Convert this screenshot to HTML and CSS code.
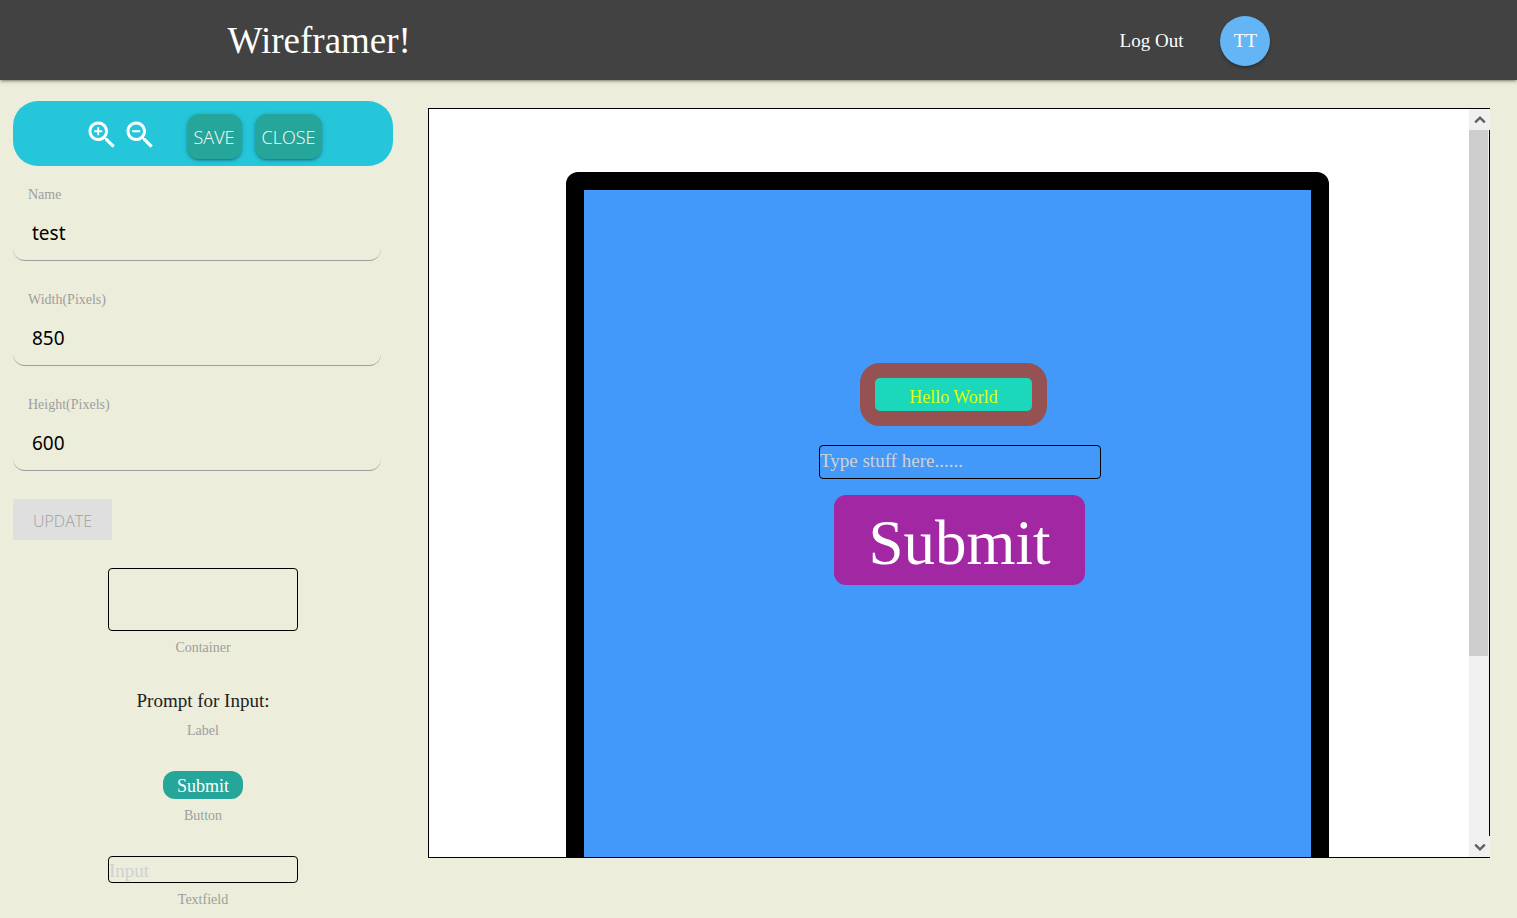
FILE: index.html
```html
<!DOCTYPE html>
<html lang="en">
<head>
<meta charset="utf-8">
<meta name="viewport" content="width=device-width, initial-scale=1">
<title>Wireframer!</title>
<link rel="stylesheet" href="styles.css">
</head>
<body>
<header class="navbar">
  <div class="navbar-inner">
    <a class="brand" href="#">Wireframer!</a>
    <nav class="nav-links">
      <a class="logout" href="#">Log Out</a>
      <a class="avatar" href="#" aria-label="Account">TT</a>
    </nav>
  </div>
</header>
<main class="editor">
  <aside class="sidebar">
    <div class="toolbar">
      <div class="zoom-group">
        <button class="icon-button" type="button" aria-label="Zoom in">
          <svg viewBox="0 0 24 24"><path d="M15.5 14h-.79l-.28-.27C15.41 12.59 16 11.11 16 9.5 16 5.91 13.09 3 9.5 3S3 5.91 3 9.5 5.91 16 9.5 16c1.61 0 3.09-.59 4.23-1.57l.27.28v.79l5 4.99L20.49 19l-4.99-5zm-6 0C7.01 14 5 11.99 5 9.5S7.01 5 9.5 5 14 7.01 14 9.5 11.99 14 9.5 14zm2.7-3.9h-2.1v2.1H8.9v-2.1H6.8V8.9h2.1V6.8h1.2v2.1h2.1v1.2z"/></svg>
        </button>
        <button class="icon-button" type="button" aria-label="Zoom out">
          <svg viewBox="0 0 24 24"><path d="M15.5 14h-.79l-.28-.27C15.41 12.59 16 11.11 16 9.5 16 5.91 13.09 3 9.5 3S3 5.91 3 9.5 5.91 16 9.5 16c1.61 0 3.09-.59 4.23-1.57l.27.28v.79l5 4.99L20.49 19l-4.99-5zm-6 0C7.01 14 5 11.99 5 9.5S7.01 5 9.5 5 14 7.01 14 9.5 11.99 14 9.5 14zM6.8 8.9h5.4v1.2H6.8z"/></svg>
        </button>
      </div>
      <div class="action-group">
        <button class="action" type="button">SAVE</button>
        <button class="action" type="button">CLOSE</button>
      </div>
    </div>
    <form class="fields">
      <div class="field">
        <label for="name">Name</label>
        <input id="name" type="text" value="test">
      </div>
      <div class="field">
        <label for="width">Width(Pixels)</label>
        <input id="width" type="text" value="850">
      </div>
      <div class="field">
        <label for="height">Height(Pixels)</label>
        <input id="height" type="text" value="600">
      </div>
      <button class="update" type="button" disabled>UPDATE</button>
    </form>
    <div class="palette">
      <div class="palette-item">
        <div class="sample-container"></div>
        <span class="caption">Container</span>
      </div>
      <div class="palette-item">
        <div class="sample-label">Prompt for Input:</div>
        <span class="caption">Label</span>
      </div>
      <div class="palette-item">
        <button class="sample-button" type="button">Submit</button>
        <span class="caption">Button</span>
      </div>
      <div class="palette-item">
        <input class="sample-input" type="text" placeholder="Input" aria-label="Textfield">
        <span class="caption">Textfield</span>
      </div>
    </div>
  </aside>
  <section class="workspace">
    <div class="viewport">
      <div class="wireframe">
        <div class="control greeting">Hello World</div>
        <input class="control textfield" type="text" placeholder="Type stuff here......" aria-label="Type stuff here">
        <button class="control submit" type="button">Submit</button>
      </div>
    </div>
    <div class="scrollbar">
      <button class="scroll-arrow" type="button" aria-label="Scroll up"><svg viewBox="0 0 10 8"><path d="M1 6l4-4 4 4"/></svg></button>
      <div class="scroll-track"><div class="scroll-thumb"></div></div>
      <button class="scroll-arrow" type="button" aria-label="Scroll down"><svg viewBox="0 0 10 8"><path d="M1 2l4 4 4-4"/></svg></button>
    </div>
  </section>
</main>
</body>
</html>
```
FILE: styles.css
```css
* { box-sizing: border-box; }

body {
  margin: 0;
  height: 100vh;
  overflow: hidden;
  background: #ecedda;
  color: #212121;
  font-family: "Liberation Serif", "Times New Roman", serif;
  font-size: 19px;
}

button, input { font: inherit; border: 0; padding: 0; margin: 0; background: none; }
a { color: inherit; text-decoration: none; }

.navbar {
  height: 80px;
  background: #424242;
  color: #fff;
  box-shadow: 0 2px 2px rgba(0, 0, 0, .14), 0 3px 1px -2px rgba(0, 0, 0, .12), 0 1px 5px rgba(0, 0, 0, .2);
}
.navbar-inner {
  width: 70%;
  height: 100%;
  margin: 0 auto;
  padding-right: 19px;
  display: flex;
  align-items: center;
  justify-content: space-between;
}
.brand { font-size: 37px; }
.nav-links { display: flex; align-items: center; gap: 37px; padding-top: 2px; }
.avatar {
  width: 50px;
  height: 50px;
  border-radius: 50%;
  background: #64b5f6;
  line-height: 50px;
  text-align: center;
  box-shadow: 0 2px 3px rgba(0, 0, 0, .3);
}

.editor {
  display: grid;
  grid-template-columns: 380fr 1062fr;
  column-gap: 35px;
  align-items: start;
  padding: 21px 27px 0 13px;
}

.toolbar {
  height: 65px;
  border-radius: 25px;
  background: #26c6da;
  display: flex;
  justify-content: center;
  gap: 29px;
  padding-top: 13px;
}
.zoom-group { display: flex; gap: 2px; padding-top: 3px; }
.icon-button { width: 36px; height: 36px; }
.icon-button svg { display: block; width: 36px; height: 36px; fill: #fff; }
.action-group { display: flex; gap: 13px; }
.action {
  height: 45px;
  padding: 1px 7px 0;
  border-radius: 12px;
  background: #26a69a;
  color: #fff;
  font-family: "Open Sans", sans-serif;
  font-size: 18px;
  font-weight: 300;
  box-shadow: 0 2px 2px rgba(0, 0, 0, .14), 0 3px 1px -2px rgba(0, 0, 0, .12), 0 1px 5px rgba(0, 0, 0, .2);
}

.fields { padding: 20px 12px 0 0; }
.field + .field { margin-top: 30px; }
.field label {
  display: block;
  padding-left: 15px;
  color: #9e9e9e;
  font-size: 14px;
  line-height: 18px;
}
.field input {
  display: block;
  width: 100%;
  height: 56px;
  padding: 0 19px;
  border-bottom: 1px solid #9e9e9e;
  border-radius: 12px;
  color: #000;
  font-family: "Noto Sans", sans-serif;
  font-size: 19px;
  margin-top: 1px;
}
.update {
  display: block;
  width: 99px;
  height: 41px;
  margin-top: 28px;
  padding-top: 3px;
  border-radius: 2px;
  background: #dfdfdf;
  color: #9f9f9f;
  font-family: "Open Sans", sans-serif;
  font-size: 16px;
  font-weight: 300;
}

.palette {
  display: flex;
  flex-direction: column;
  gap: 32px;
  padding-top: 28px;
}
.palette-item { display: flex; flex-direction: column; align-items: center; }
.caption { color: #9e9e9e; font-size: 14px; line-height: 17px; margin-top: 8px; }
.sample-container { width: 50%; height: 63px; border: 1px solid #000; border-radius: 4px; }
.sample-label { line-height: 26px; }
.sample-button {
  width: 80px;
  height: 28px;
  padding-top: 2px;
  border-radius: 12px;
  background: #26a69a;
  color: #fff;
  font-size: 18px;
}
.sample-input { width: 50%; height: 27px; padding-top: 3px; border: 1px solid #000; border-radius: 4px; }
input::placeholder { color: #d1d1d1; opacity: 1; }

.workspace {
  height: 750px;
  margin-top: 7px;
  display: flex;
  border: 1px solid #000;
  background: #fff;
}
.viewport { flex: 1; overflow: hidden; padding: 63px 3px 0 0; }
.wireframe {
  position: relative;
  width: 763px;
  height: 1000px;
  margin: 0 auto;
  border: 18px solid #000;
  border-radius: 12px;
  background: #4299fa;
}
.control { position: absolute; }
.greeting {
  left: 276px;
  top: 173px;
  width: 187px;
  height: 63px;
  border: 15px solid #965252;
  border-radius: 20px;
  background: #1ad8b9;
  color: #deff0a;
  font-size: 18px;
  line-height: 38px;
  text-align: center;
}
.textfield {
  left: 235px;
  top: 255px;
  width: 282px;
  height: 34px;
  padding-bottom: 2px;
  border: 1px solid #000;
  border-radius: 4px;
}
.submit {
  left: 250px;
  top: 305px;
  width: 251px;
  height: 90px;
  padding-top: 6px;
  border-radius: 12px;
  background: #a127a3;
  color: #fff;
  font-size: 63px;
}

.scrollbar { width: 20px; display: flex; flex-direction: column; background: #f0f0f0; }
.scroll-arrow {
  height: 21px;
  width: 21px;
  display: flex;
  align-items: center;
  justify-content: center;
  background: #f0f0f0;
}
.scroll-arrow svg { width: 12px; height: 10px; fill: none; stroke: #606060; stroke-width: 2; }
.scroll-track { flex: 1; }
.scroll-thumb { width: 19px; height: 526px; background: #cdcdcd; }
```
